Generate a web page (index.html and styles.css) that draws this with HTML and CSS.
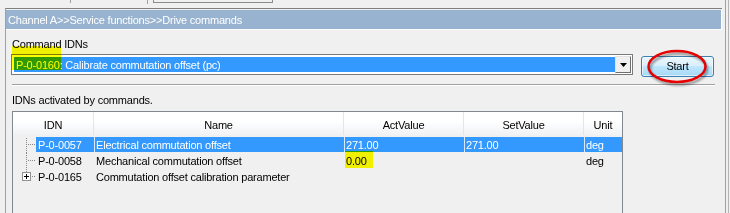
FILE: index.html
```html
<!DOCTYPE html>
<html>
<head>
<meta charset="utf-8">
<link rel="stylesheet" href="styles.css">
</head>
<body>
<div class="screen">
  <div class="leftcol">
    <div class="top">
      <div class="t1"></div>
      <div class="t2"></div>
      <div class="t3"></div>
    </div>
    <div class="panel">
      <div class="crumb">Channel A&gt;&gt;Service functions&gt;&gt;Drive commands</div>
      <div class="content">
        <div class="label">Command IDNs</div>
        <div class="cmdrow">
          <div class="combo">
            <div class="sel">P-0-0160: Calibrate commutation offset (pc)</div>
            <div class="dropbtn">
              <svg width="7" height="4" viewBox="0 0 7 4"><path d="M0 0H7L3.5 4Z" fill="#000"/></svg>
            </div>
          </div>
          <div class="startwrap">
            <button class="start">Start</button>
            <svg class="ring" width="95" height="45" viewBox="0 0 95 45">
              <defs>
                <filter id="sh" x="-20%" y="-40%" width="140%" height="180%">
                  <feGaussianBlur stdDeviation="1.2"/>
                </filter>
              </defs>
              <ellipse cx="47.5" cy="21" rx="28.5" ry="15.5" fill="none" stroke="rgba(0,0,0,0.4)" stroke-width="2.5" filter="url(#sh)"/>
              <ellipse cx="46" cy="18.5" rx="28.5" ry="15.5" fill="none" stroke="#e60000" stroke-width="2.5"/>
            </svg>
          </div>
        </div>
        <div class="sep"></div>
        <div class="label2">IDNs activated by commands.</div>
        <div class="list">
          <div class="lhead">
            <div class="c1">IDN</div>
            <div class="c2">Name</div>
            <div class="c3">ActValue</div>
            <div class="c4">SetValue</div>
            <div class="c5">Unit</div>
          </div>
          <div class="rows">
            <div class="row selected">
              <div class="c1">
                <svg class="tree" width="23" height="16" viewBox="0 0 23 16">
                  <line x1="13.5" y1="1" x2="13.5" y2="16" class="dot"/>
                  <line x1="15" y1="7.5" x2="23" y2="7.5" class="dot"/>
                </svg>
                <span class="idn">P-0-0057</span>
              </div>
              <div class="c2 cell">Electrical commutation offset</div>
              <div class="c3 cell">271.00</div>
              <div class="c4 cell">271.00</div>
              <div class="c5 cell">deg</div>
            </div>
            <div class="row">
              <div class="c1">
                <svg class="tree" width="23" height="16" viewBox="0 0 23 16">
                  <line x1="13.5" y1="0" x2="13.5" y2="16" class="dot"/>
                  <line x1="15" y1="7.5" x2="23" y2="7.5" class="dot"/>
                </svg>
                <span class="idn">P-0-0058</span>
              </div>
              <div class="c2 cell">Mechanical commutation offset</div>
              <div class="c3 cell">0.00</div>
              <div class="c4 cell"></div>
              <div class="c5 cell">deg</div>
            </div>
            <div class="row">
              <div class="c1">
                <svg class="tree" width="23" height="16" viewBox="0 0 23 16">
                  <line x1="13.5" y1="0" x2="13.5" y2="3" class="dot"/>
                  <rect x="9.5" y="3.5" width="8" height="8" fill="#fff" stroke="#919191"/>
                  <line x1="11" y1="7.5" x2="16" y2="7.5" stroke="#000"/>
                  <line x1="13.5" y1="5" x2="13.5" y2="10" stroke="#000"/>
                  <line x1="19" y1="7.5" x2="23" y2="7.5" class="dot"/>
                </svg>
                <span class="idn">P-0-0165</span>
              </div>
              <div class="c2 cell">Commutation offset calibration parameter</div>
              <div class="c3 cell"></div>
              <div class="c4 cell"></div>
              <div class="c5 cell"></div>
            </div>
          </div>
        </div>
      </div>
      <div class="mark mark-cmd"></div>
      <div class="mark mark-val"></div>
    </div>
  </div>
  <div class="edges">
    <div class="eline"></div>
    <div class="eline2"></div>
  </div>
</div>
</body>
</html>
```

FILE: styles.css
```css
* { box-sizing: border-box; }
html, body { margin: 0; padding: 0; }
body {
  width: 730px;
  height: 213px;
  overflow: hidden;
  background: #f0f0f0;
  font-family: "Liberation Sans", Arial, sans-serif;
  font-size: 11px;
  letter-spacing: -0.2px;
  color: #000;
}
.screen { display: flex; height: 213px; }
.leftcol { width: 722px; display: flex; flex-direction: column; }

.top { height: 8px; display: flex; flex: none; }
.t1 { margin-left: 70px; width: 1px; height: 3px; background: #a0a0a0; }
.t2 { margin-left: 76px; width: 1px; height: 4px; background: #a0a0a0; }
.t3 { margin-left: 5px; width: 120px; height: 3px; border: 1px solid #8c8c8c; border-top: none; }

.panel {
  position: relative;
  flex: 1;
  margin-left: 5px;
  border-left: 1px solid #a0a0a0;
  border-top: 1px solid #808080;
}
.crumb {
  margin-top: 1px;
  height: 20px;
  padding: 1px 0 0 2px;
  line-height: 18px;
  background: #98b3cf;
  color: #fff;
  border-bottom: 1px solid #fff;
  border-right: 1px solid #fff;
  white-space: nowrap;
}
.content { padding-left: 5px; }
.label { margin-top: 8px; padding-left: 1px; height: 13px; line-height: 13px; }

.cmdrow { display: flex; align-items: flex-start; margin-top: 3px; }
.combo {
  display: flex;
  width: 622px;
  height: 21px;
  padding: 1px 1px 1px 2px;
  border: 1px solid #7a7a7a;
  background: #fff;
}
.sel {
  flex: 1;
  margin-top: 1px;
  height: 15px;
  padding: 1px 0 0 2px;
  line-height: 14px;
  background: #3399ff;
  color: #fff;
  white-space: nowrap;
}
.dropbtn {
  width: 16px;
  height: 17px;
  display: flex;
  align-items: center;
  justify-content: center;
  background: #f0f0f0;
  border: 1px solid;
  border-color: #e3e3e3 #6f6f6f #6f6f6f #e3e3e3;
}
.dropbtn svg { display: block; }

.startwrap { position: relative; margin-left: 8px; margin-top: 2px; }
.start {
  display: block;
  width: 73px;
  height: 21px;
  padding: 0;
  border: 1px solid #3c7fb1;
  border-radius: 3px;
  background: linear-gradient(#eaf6fd 0%, #d9f0fc 45%, #bee6fd 50%, #a7d9f5 100%);
  box-shadow: inset 0 0 0 1px rgba(255,255,255,0.6);
  font: inherit;
  letter-spacing: inherit;
  line-height: 19px;
  color: #000;
  text-align: center;
}
.ring { position: absolute; left: -10px; top: -8px; overflow: visible; pointer-events: none; }

.sep {
  margin-top: 7px;
  margin-left: 1px;
  width: 703px;
  height: 2px;
  border-top: 1px solid #a0a0a0;
  border-bottom: 1px solid #fff;
}
.label2 { margin-top: 8px; padding-left: 1px; height: 13px; line-height: 13px; }

.list {
  margin-top: 4px;
  margin-left: 1px;
  width: 611px;
  height: 102px;
  border: 1px solid #828790;
  border-bottom: none;
  background: #f0f0f0;
  overflow: hidden;
}
.lhead {
  display: flex;
  height: 23px;
  background: linear-gradient(#ffffff 0%, #ffffff 40%, #f7f8fa 70%, #f1f2f4 100%);
}
.lhead div {
  border-right: 1px solid #e5e5e5;
  text-align: center;
  padding-top: 7px;
  line-height: 13px;
}
.lhead .c5 { border-right: none; }
.c1 { width: 81px; flex: none; }
.c2 { width: 250px; flex: none; }
.c3 { width: 120px; flex: none; }
.c4 { width: 120px; flex: none; }
.c5 { width: 38px; flex: none; }

.rows { padding-top: 2px; }
.row { display: flex; height: 16px; }
.row .c1 { display: flex; }
.tree { display: block; flex: none; }
.dot { stroke: #8a8a8a; stroke-width: 1; stroke-dasharray: 1 1; shape-rendering: crispEdges; }
.idn, .cell {
  height: 15px;
  padding: 1px 0 0 2px;
  line-height: 14px;
  white-space: nowrap;
  overflow: hidden;
}
.idn { flex: 1; }
.cell { border-left: 1px solid transparent; padding-left: 1px; }
.selected .idn, .selected .cell { background: #3399ff; color: #fff; }
.selected .cell { border-left-color: #d6e9ff; }

.mark { position: absolute; background: #ffff00; mix-blend-mode: multiply; pointer-events: none; }
.mark-cmd { left: 6px; top: 37px; width: 49px; height: 24px; }
.mark-val { left: 339px; top: 142px; width: 28px; height: 17px; }

.edges { display: flex; margin-left: 3px; }
.eline { width: 1px; background: #a0a0a0; }
.eline2 { width: 1px; margin-left: 2px; background: #b4b4b4; }
```
